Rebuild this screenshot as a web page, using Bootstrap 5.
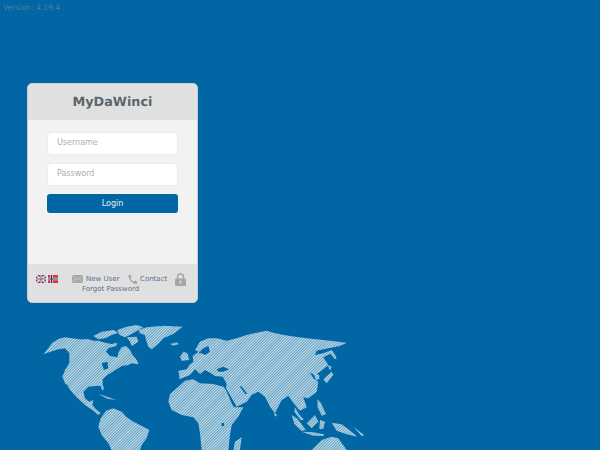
<!doctype html>
<html lang="en"><head><meta charset="utf-8">
<link href="https://cdn.jsdelivr.net/npm/bootstrap@5.3.0/dist/css/bootstrap.min.css" rel="stylesheet">
<style>
html,body{height:100%}
body{background:#0066a4;font-family:"DejaVu Sans",sans-serif;overflow:hidden;position:relative;width:600px;height:450px;text-rendering:geometricPrecision}
.ver{font-size:7.6px;color:#4f7f9e;line-height:15px;padding-left:3px}
.mapart{position:absolute;left:0;top:0}
.logincard{position:absolute;left:27px;top:83px;width:171px;height:220px;background:#f2f2f2;border:1px solid #c4ced6;border-radius:5px;overflow:hidden;display:flex;flex-direction:column}
.lhead{height:36px;background:#e0e0e0;color:#5b666c;font-size:12.8px;font-weight:700;flex:none;padding-top:1px}
.lbody{flex:1 1 auto;padding:12px 19px 0}
.lbody .form-control{height:23px;border-radius:4px;border:1px solid #ececec;background:#fff;font-size:8px;padding:0 9px 3px;margin-bottom:8px;box-shadow:none}
.lbody .form-control::placeholder{color:#adadad}
.lbtn{display:block;width:100%;height:19px;background:#0066a4;color:#e8f0f5;border:0;border-radius:3px;font-size:8px;padding:0}
.lfoot{height:38px;flex:none;background:#e0e0e0;position:relative;font-size:7px;color:#5b6f94}
.lfoot a{color:#5b6f94;text-decoration:none;position:absolute;white-space:nowrap;line-height:10px}
.lfoot svg{position:absolute}
</style></head>
<body>
<svg class="mapart" width="600" height="450" xmlns="http://www.w3.org/2000/svg">
<defs>
<pattern id="hatch" width="6" height="6" patternUnits="userSpaceOnUse" patternTransform="rotate(-45)">
<rect width="6" height="6" fill="#4f94bc"/><rect width="6" height="3.4" fill="#c8dfe9"/>
</pattern>
</defs>
<g transform="translate(30 320) scale(.33333)">
<g fill="url(#hatch)">
<path d="M40 102L55 85 68 68 85 57 105 52 125 55 150 58 175 58 190 62 205 62 225 68 245 72 262 68 258 78 235 85 228 95 240 108 262 112 266 95 275 82 288 78 300 90 308 105 322 122 325 133 305 130 295 135 275 138 265 145 248 155 232 165 218 178 218 195 222 205 217 212 212 198 195 198 175 200 160 215 165 235 178 245 190 240 187 255 198 268 212 280 205 285 190 272 165 255 140 232 125 215 105 190 97 170 105 150 118 128 118 100 105 85 85 88 62 95Z"/>
<path d="M190 48L215 35 250 30 265 38 245 45 225 55 205 58Z"/>
<path d="M262 30L290 20 320 15 340 22 325 30 305 42 285 52 268 45Z"/>
<path d="M290 52L320 50 325 65 305 78 300 65Z"/>
<path d="M325 30L350 22 400 17 458 20 430 42 400 55 385 72 365 88 355 80 348 60 345 45 330 40Z"/>
<path d="M420 72L440 67 447 72 430 77Z"/>
<path d="M205 222L225 228 258 240 232 236Z"/>
<path d="M205 320L212 295 228 272 250 265 275 275 290 292 310 305 340 320 358 330 350 355 335 375 330 390 245 390 235 370 215 345Z"/>
<path d="M415 245L420 222 445 200 465 182 490 178 510 190 550 192 580 200 588 210 605 250 612 262 640 262 625 290 605 315 600 345 595 390 515 390 510 340 505 310 490 292 455 285 425 270Z"/>
<path d="M610 390L615 365 635 352 630 390Z"/>
<path d="M448 170L445 152 470 148 478 135 490 125 488 108 505 95 495 90 510 65 535 55 560 55 590 62 620 55 650 45 680 38 710 32 735 40 780 48 830 55 880 60 950 68 930 78 895 85 860 92 855 105 880 100 905 90 920 112 905 100 880 112 895 135 870 155 855 165 840 158 850 175 865 185 860 215 835 235 820 232 830 262 810 272 795 255 775 228 755 240 735 280 720 260 705 230 685 215 665 225 650 245 620 260 600 225 588 205 590 192 578 170 555 168 540 158 525 150 510 162 495 148 480 165 448 178Z"/>
<path d="M450 110L460 95 472 100 478 120 455 122Z"/>
<path d="M880 178L905 155 898 142 910 165 890 190Z"/>
<path d="M893 135L905 140 900 152Z"/>
<path d="M905 90L920 115 915 118 900 100Z"/>
<path d="M850 158L868 165 868 178 858 180Z"/>
<path d="M862 238L872 248 888 282 875 287 863 262Z"/>
<path d="M785 285L802 296 828 330 815 333 793 312Z"/>
<path d="M815 335L850 337 882 343 880 348 850 347Z"/>
<path d="M830 310L855 285 865 305 845 325Z"/>
<path d="M870 300L885 305 880 327 868 327Z"/>
<path d="M905 308L935 313 962 333 982 350 950 343 920 332Z"/>
<path d="M970 320L1003 346 995 348Z"/>
<path d="M845 390L875 360 905 350 925 355 950 390Z"/>
<path d="M732 278L742 285 735 290Z"/>
<path d="M795 262L805 280 822 300 812 300 793 275Z"/>
</g>
<g fill="#0066a4">
<path d="M560 148L580 140 597 148 580 155 565 155Z"/>
<path d="M505 100L520 85 535 78 540 95 525 105 515 100Z"/>
<path d="M215 130L232 125 235 145 222 150Z"/>
<path d="M108 192L112 194 124 222 120 222Z"/>
<path d="M628 198L636 200 652 222 646 222Z"/>
<path d="M574 310L582 308 582 318 575 318Z"/>
</g>
</g>
</svg>
<div class="ver">Version: 4.19.4</div>
<div class="logincard">
<div class="lhead d-flex align-items-center justify-content-center">MyDaWinci</div>
<div class="lbody">
<input class="form-control" type="text" placeholder="Username">
<input class="form-control" type="password" placeholder="Password">
<button class="lbtn" type="button">Login</button>
</div>
<div class="lfoot">
<svg style="left:8px;top:11px" width="10" height="8" viewBox="0 0 10 8"><rect width="10" height="8" fill="#3c3f80"/><path d="M0 0L10 8M10 0L0 8" stroke="#e8e0e4" stroke-width="1.4"/><path d="M5 0V8M0 4H10" stroke="#e8e0e4" stroke-width="2.4"/><path d="M5 0V8M0 4H10" stroke="#b7455e" stroke-width="1"/></svg>
<svg style="left:20px;top:11px" width="10" height="8" viewBox="0 0 10 8"><rect width="10" height="8" fill="#d8343f"/><path d="M3.5 0V8M0 4H10" stroke="#f2e6e8" stroke-width="2.4"/><path d="M3.5 0V8M0 4H10" stroke="#26357a" stroke-width="1.1"/></svg>
<svg style="left:44px;top:11px" width="11" height="8" viewBox="0 0 11 8"><rect width="11" height="8" rx=".6" fill="#a9a9a9"/><path d="M0 .5L5.5 4.5 11 .5M0 7.5L4 3.5M11 7.5L7 3.5" fill="none" stroke="#d4d4d4" stroke-width=".7"/></svg>
<a href="#" style="left:58px;top:10px">New User</a>
<svg style="left:99px;top:10px" width="11" height="11" viewBox="0 0 11 11"><path d="M1.5 1L3.5 .6 4.5 3 3.4 4C3.8 5.3 5.2 6.9 6.8 7.6L8 6.5 10.4 7.8 9.8 10C6 10.6 .8 5.2 1.5 1Z" fill="#a4a4a4"/></svg>
<a href="#" style="left:112px;top:10px">Contact</a>
<svg style="left:147px;top:9px" width="11" height="13" viewBox="0 0 11 13"><path d="M2.5 6V4A3 3 0 0 1 8.5 4V6" fill="none" stroke="#a6a6a6" stroke-width="1.5"/><rect y="5.4" width="11" height="7.6" rx="1.2" fill="#a6a6a6"/><rect x="4.7" y="7.5" width="1.6" height="3.2" fill="#dcdcdc"/></svg>
<a href="#" style="left:54px;top:20px">Forgot Password</a>
</div>
</div>
</body></html>
